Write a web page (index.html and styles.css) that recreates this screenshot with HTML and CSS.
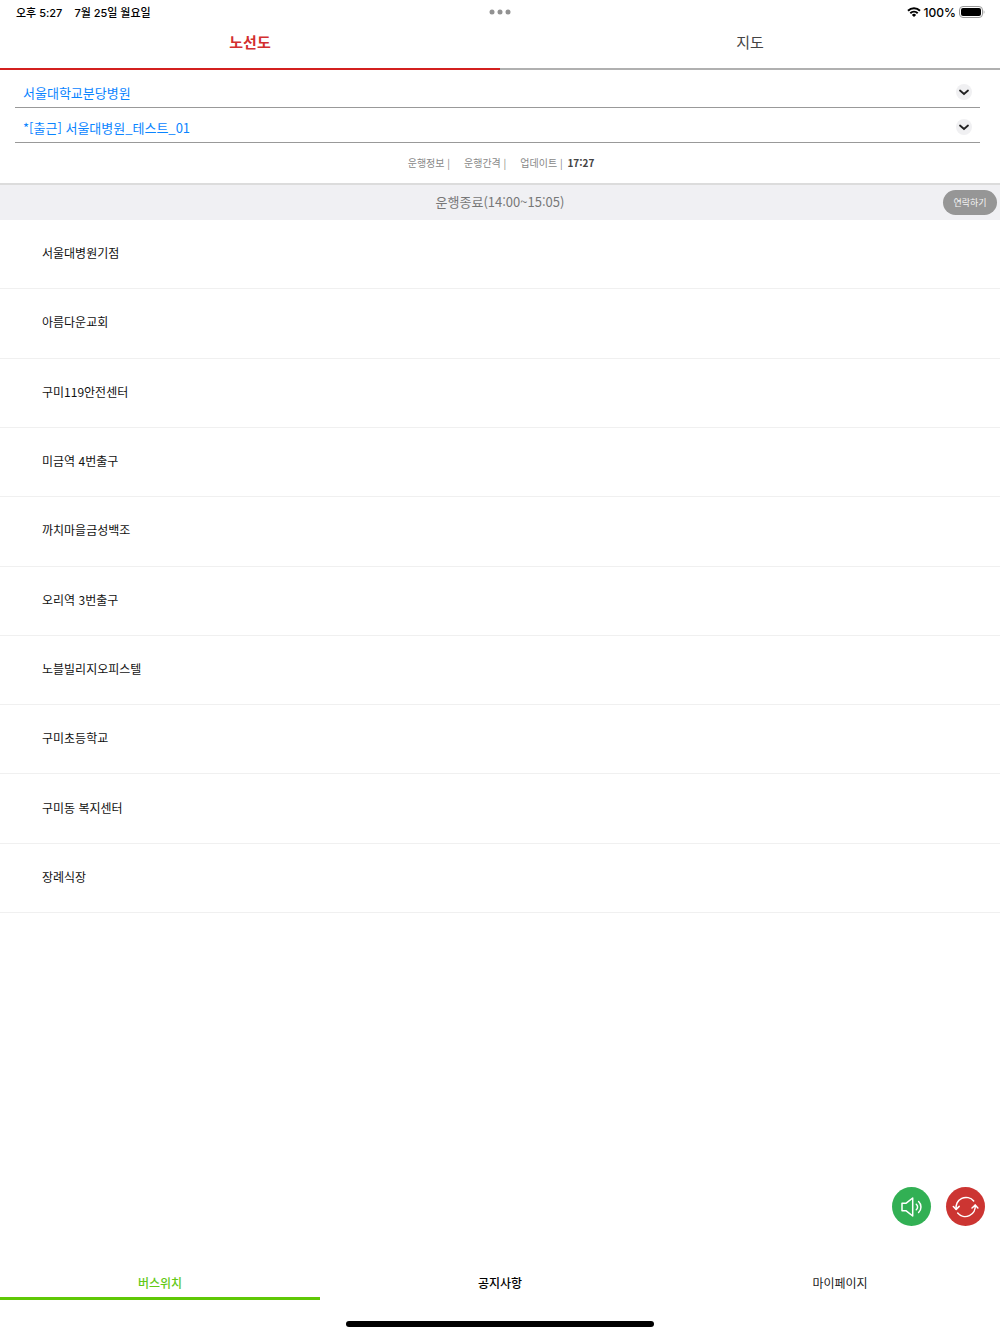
FILE: index.html
```html
<!DOCTYPE html>
<html lang="ko">
  <head>
    <meta charset="utf-8">
    <meta name="viewport" content="width=device-width, initial-scale=1">
    <title>노선도</title>
    <link rel="stylesheet" href="styles.css">
  </head>
  <body>
    <div class="statusbar">
      <div class="clock"><span>오후 5:27</span><span>7월 25일 월요일</span></div>
      <svg class="dots" width="22" height="6" viewBox="0 0 22 6"><circle cx="3" cy="3" r="2.5"/><circle cx="11" cy="3" r="2.5"/><circle cx="19" cy="3" r="2.5"/></svg>
      <div class="device">
        <svg width="14" height="10" viewBox="0 0 14 10" fill="none" stroke="#000" stroke-width="2">
          <path d="M1 3.8a8.6 8.6 0 0 1 12 0"/>
          <path d="M3.3 6.3a5.3 5.3 0 0 1 7.4 0"/>
          <path d="M7 10 4.9 7.9a3 3 0 0 1 4.2 0z" fill="#000" stroke="none"/>
        </svg>
        <span>100%</span>
        <svg width="26" height="12" viewBox="0 0 26 12">
          <rect x="0.5" y="0.5" width="23" height="11" rx="3.5" fill="none" stroke="#999"/>
          <rect x="2" y="2" width="20" height="8" rx="2"/>
          <path d="M24.7 4.2c1 .5 1 3.1 0 3.6z" fill="#999"/>
        </svg>
      </div>
    </div>

    <nav class="tabs">
      <button class="tab active">노선도</button>
      <button class="tab">지도</button>
    </nav>

    <main>
      <form class="route">
        <label class="field">
          <select aria-label="기관">
            <option>서울대학교분당병원</option>
          </select>
          <svg class="arrow" width="16" height="16" viewBox="0 0 16 16"><circle cx="8" cy="8" r="8"/><path d="m4 6.5 4 3.500 4-3.500"/></svg>
        </label>
        <label class="field">
          <select aria-label="노선">
            <option>*[출근] 서울대병원_테스트_01</option>
          </select>
          <svg class="arrow" width="16" height="16" viewBox="0 0 16 16"><circle cx="8" cy="8" r="8"/><path d="m4 6.5 4 3.500 4-3.500"/></svg>
        </label>
      </form>

      <div class="info">
        <span>운행정보 |</span>
        <span>운행간격 |</span>
        <span>업데이트 | <b>17:27</b></span>
      </div>

      <div class="service">
        <span>운행종료(14:00~15:05)</span>
        <button class="contact">연락하기</button>
      </div>

      <ul class="stops">
        <li>서울대병원기점</li>
        <li>아름다운교회</li>
        <li>구미119안전센터</li>
        <li>미금역 4번출구</li>
        <li>까치마을금성백조</li>
        <li>오리역 3번출구</li>
        <li>노블빌리지오피스텔</li>
        <li>구미초등학교</li>
        <li>구미동 복지센터</li>
        <li>장례식장</li>
      </ul>
    </main>

    <div class="floating">
      <button class="round sound" aria-label="음성 안내">
        <svg width="39" height="39" viewBox="0 0 39 39">
          <path d="M10 16.200h4.200l6.500-5.200v18l-6.500-5.200H10z"/>
          <path d="M24.300 17.200a3.700 3.700 0 0 1 0 5.600"/>
          <path d="M26.600 14.500a7.600 7.600 0 0 1 0 11"/>
        </svg>
      </button>
      <button class="round refresh" aria-label="새로고침">
        <svg width="39" height="39" viewBox="0 0 39 39">
          <path d="M27.700 14A10 10 0 0 0 10.200 22.300"/>
          <path d="m7.300 19.500 2.900 2.900 3-3"/>
          <path d="M11.700 26A10 10 0 0 0 29.200 18.200"/>
          <path d="m26 21 3.200-2.900 2.700 2.900"/>
        </svg>
      </button>
    </div>

    <footer>
      <nav class="menu">
        <a href="#bus" class="current">버스위치</a>
        <a href="#notice" class="strong">공지사항</a>
        <a href="#mypage">마이페이지</a>
      </nav>
      <div class="home-bar"></div>
    </footer>
  </body>
</html>
```

FILE: styles.css
```css
* {
  box-sizing: border-box;
}

body {
  margin: 0;
  min-height: 100vh;
  display: flex;
  flex-direction: column;
  background: #fff;
  color: #111;
  font-family: "Noto Sans CJK KR", sans-serif;
  font-size: 12px;
}

button,
select {
  font-family: inherit;
  border: none;
  border-radius: 0;
  background: none;
  padding: 0;
  margin: 0;
}

svg {
  display: block;
}

/* device status */
.statusbar {
  height: 24px;
  padding: 0 15px;
  display: grid;
  grid-template-columns: 1fr auto 1fr;
  align-items: center;
  color: #000;
  font-family: Inter, "Noto Sans CJK KR", sans-serif;
  font-size: 11px;
  font-weight: 500;
}

.clock {
  display: flex;
  gap: 12px;
  padding-left: 1px;
}

.dots {
  fill: #929292;
}

.device {
  display: flex;
  justify-content: flex-end;
  align-items: center;
  gap: 3px;
  font-size: 12px;
}

/* tabs */
.tabs {
  display: flex;
}

.tab {
  flex: 1;
  height: 46px;
  padding-bottom: 10px;
  border-bottom: 2px solid #b0b0b0;
  color: #444;
  font-size: 15px;
}

.tab.active {
  border-color: #d3201f;
  color: #d32f2f;
  font-weight: bold;
}

/* route selects */
.route {
  padding: 3px 20px 0 15px;
}

.field {
  display: block;
  position: relative;
  border-bottom: 1px solid #999;
}

.field select {
  display: block;
  width: 100%;
  height: 34px;
  padding: 5px 32px 0 8px;
  -webkit-appearance: none;
  appearance: none;
  color: #0a84ff;
  font-size: 13px;
}

.arrow {
  position: absolute;
  right: 8px;
  top: 11px;
  pointer-events: none;
  fill: #f0f0f2;
}

.arrow path {
  fill: none;
  stroke: #222;
  stroke-width: 1.8;
  stroke-linecap: round;
}

.info {
  height: 40px;
  padding: 0 0 2px 2px;
  display: flex;
  justify-content: center;
  align-items: center;
  gap: 14px;
  color: #888;
  font-size: 10px;
}

.info b {
  margin-left: 2px;
  color: #444;
}

.service {
  height: 37px;
  position: relative;
  display: flex;
  justify-content: center;
  align-items: center;
  padding-bottom: 2px;
  border-top: 2px solid #dcdcdc;
  background: #f0f0f3;
  color: #777;
  font-size: 13px;
}

.contact {
  position: absolute;
  right: 3px;
  top: 5px;
  width: 54px;
  height: 25px;
  border-radius: 13px;
  background: #969696;
  color: #f4f4f4;
  font-size: 9px;
}

/* stops */
.stops {
  min-height: 693px;
  margin: 0;
  padding: 0;
  display: grid;
  grid-auto-rows: 1fr;
  list-style: none;
}

.stops li {
  display: flex;
  align-items: center;
  padding: 0 42px 3px;
  border-bottom: 1px solid #f0f0f0;
}

.floating {
  position: fixed;
  right: 15px;
  bottom: 108px;
  display: flex;
  gap: 15px;
}

.round {
  width: 39px;
  height: 39px;
  border-radius: 50%;
}

.round svg {
  fill: none;
  stroke: #fff;
  stroke-width: 1.5;
  stroke-linecap: round;
  stroke-linejoin: round;
}

.sound {
  background: #32b054;
}

.refresh {
  background: #cc3532;
}

/* bottom menu */
footer {
  margin-top: auto;
  padding-bottom: 7px;
}

.menu {
  display: grid;
  grid-template-columns: repeat(3, 1fr);
  gap: 20px;
}

.menu a {
  line-height: 28px;
  border-bottom: 3px solid transparent;
  color: #222;
  text-align: center;
  text-decoration: none;
}

.menu .strong {
  color: #000;
  font-weight: 500;
}

.menu .current {
  border-color: #5fc805;
  color: #62c916;
  font-weight: 500;
}

.home-bar {
  width: 308px;
  height: 6px;
  margin: 21px auto 0;
  border-radius: 3px;
  background: #000;
}
```
